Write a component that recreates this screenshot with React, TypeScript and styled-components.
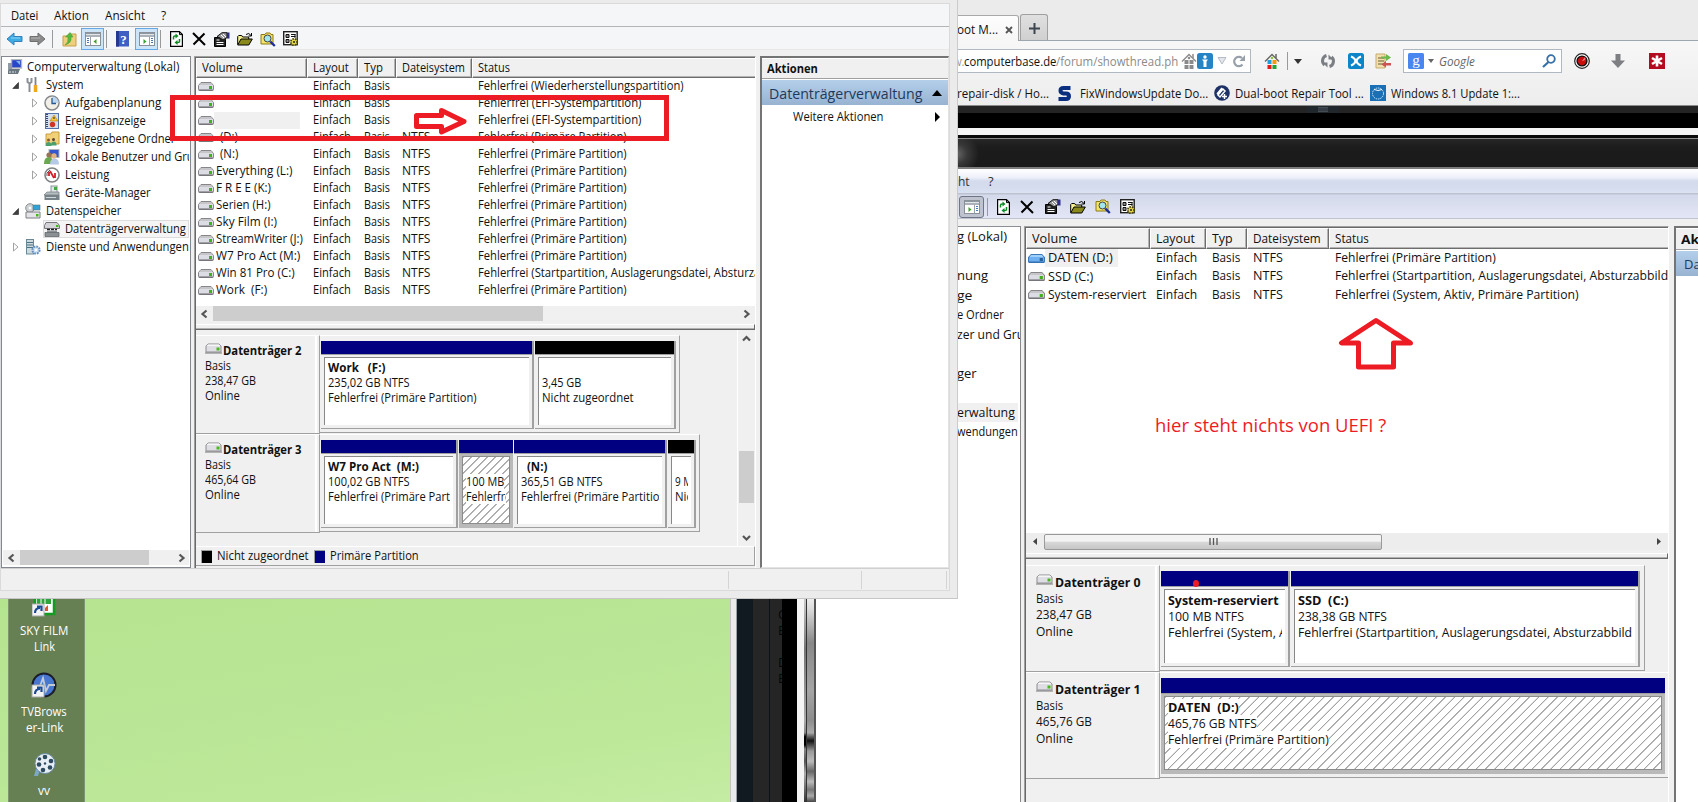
import React, { useLayoutEffect, useRef } from 'react';
import styled, { createGlobalStyle, css } from 'styled-components';

const Global = createGlobalStyle`
  * { box-sizing: border-box; }
  body { margin: 0; overflow: hidden; background: #fff; font-family: 'Open Sans', 'Noto Sans', sans-serif; font-size: 12px; color: #111; }
  svg { display: block; flex: none; }
`;

/* ---------- text fitted to a column width ---------- */
const FitBox = styled.span<{ $w: number; $size: number; $bold?: boolean; $color?: string; $ml?: number; $white?: boolean; $italic?: boolean }>`
  display: block;
  flex: none;
  width: ${p => p.$w}px;
  margin-left: ${p => p.$ml || 0}px;
  font-size: ${p => p.$size}px;
  font-weight: ${p => (p.$bold ? 700 : 400)};
  font-style: ${p => (p.$italic ? 'italic' : 'normal')};
  color: ${p => p.$color || 'inherit'};
  background: ${p => (p.$white ? '#fff' : 'none')};
  white-space: pre;
`;
const FitInner = styled.span`
  display: inline-block;
  transform-origin: 0 50%;
`;
type FitProps = { w: number; size?: number; bold?: boolean; color?: string; ml?: number; white?: boolean; italic?: boolean; children: React.ReactNode };
const Fit = ({ w, size = 12, bold, color, ml, white, italic, children }: FitProps) => {
  const ref = useRef<HTMLSpanElement>(null);
  useLayoutEffect(() => {
    const el = ref.current;
    if (el && el.offsetWidth) el.style.transform = `scaleX(${w / el.offsetWidth})`;
  });
  return (
    <FitBox $w={w} $size={size} $bold={bold} $color={color} $ml={ml} $white={white} $italic={italic}>
      <FitInner ref={ref}>{children}</FitInner>
    </FitBox>
  );
};

const Slot = styled.div<{ $ml?: number; $mt?: number }>`
  flex: none;
  margin-left: ${p => p.$ml || 0}px;
  margin-top: ${p => p.$mt || 0}px;
`;

/* ---------- icons ---------- */
const Drive = ({ blue, w = 16 }: { blue?: boolean; w?: number }) => (
  <svg width={w} height="9" viewBox="0 0 16 9" preserveAspectRatio="none">
    <path d="M3 .5h10l2.500 3v4q0 1-1 1h-13q-1 0-1-1v-4z" fill={blue ? '#6fb0f2' : '#dcdce4'} stroke={blue ? '#3d78b8' : '#85858a'} strokeWidth="1" />
    <path d="M3 1h10l1.500 2h-13z" fill={blue ? '#9fd0fa' : '#c6c6c8'} />
    <path d="M1 8h14" stroke={blue ? '#2f6cad' : '#66666a'} />
    <rect x="11" y="4" width="3" height="3" fill={blue ? '#2c5f94' : '#3fb11c'} />
  </svg>
);
const DiskIcon = () => (
  <svg width="17" height="11" viewBox="0 0 17 11">
    <path d="M3 1h11l2 2v6H1V3z" fill="#dedee4" stroke="#8c8c90" />
    <path d="M3 1.500h11l1.500 1.500h-14z" fill="#f6f6f6" />
    <path d="M0 10h17" stroke="#77777b" />
    <rect x="11.500" y="4.500" width="3" height="3" fill="#4db81e" />
  </svg>
);
const Arrow = ({ gray }: { gray?: boolean }) => (
  <svg width="17" height="14" viewBox="0 0 17 14">
    <path d={gray ? 'M16 7 9 1v3.500H1v5h8V13z' : 'M1 7l7-6v3.500h8v5H8V13z'} fill={gray ? '#8c8c8c' : '#3cace4'} stroke={gray ? '#6f6f6f' : '#3a7fb8'} />
    <path d={gray ? 'M2 6h9' : 'M5 6h9'} stroke={gray ? '#b3b3b3' : '#8fd8f6'} />
  </svg>
);
const FolderUp = () => (
  <svg width="15" height="15" viewBox="0 0 15 15">
    <path d="M1 4h5l1-2h7v12H1z" fill="#efcf7c" stroke="#c79f4a" />
    <path d="M3 13Q7 10 6 5H3.500L8 .5 11 5H9q1 6-6 8z" fill="#56b83c" stroke="#3d9530" strokeWidth=".5" />
  </svg>
);
const Pane = ({ flip }: { flip?: boolean }) => (
  <svg width="16" height="14" viewBox="0 0 16 14">
    <rect x=".5" y=".5" width="15" height="13" fill="#fff" stroke="#8a9097" />
    <path d="M1 1.500h14M1 4h14" stroke="#8e98a3" strokeWidth="1.400" />
    <path d={flip ? 'M10.500 5v8' : 'M5.500 5v8'} stroke="#9aa0a8" />
    {flip ? <path d="M12 6.500h2M12 8.500h2M12 10.500h2" stroke="#4a78b8" /> : <path d="M2 6.500h2M2 8.500h2M2 10.500h2" stroke="#4a78b8" />}
    <path d={flip ? 'M4.500 7v5L7.500 9.500z' : 'M11.500 7v5L8.500 9.500z'} fill="#3da02c" />
  </svg>
);
const HelpBook = () => (
  <svg width="14" height="16" viewBox="0 0 14 16">
    <rect width="13" height="15.500" fill="#3f5fc2" />
    <rect width="3" height="15.500" fill="#26398f" />
    <text x="4.200" y="12.500" fontSize="13" fontWeight="700" fill="#fff" fontFamily="Liberation Serif, serif">?</text>
  </svg>
);
const Refresh = () => (
  <svg width="13" height="16" viewBox="0 0 13 16">
    <path d="M.6.6h8.800l3 3v11.800H.6z" fill="#fff" stroke="#000" strokeWidth="1.200" />
    <path d="M9.500.6v3h3" fill="none" stroke="#000" />
    <path d="M3.500 8.500V6q0-1 1.500-1h1M9.500 8v2.500q0 1-1.500 1H7" fill="none" stroke="#128a28" strokeWidth="1.500" />
    <path d="M5.500 2.500v5L8.500 5zM7.500 9v5l-3-2.500z" fill="#128a28" />
  </svg>
);
const Cross = () => (
  <svg width="14" height="14" viewBox="0 0 14 14">
    <path d="M1 1l12 12M12.500 1.500L1.500 12.500" stroke="#000" strokeWidth="2" />
  </svg>
);
const Props = () => (
  <svg width="16" height="15" viewBox="0 0 16 15">
    <path d="M.5 5.500h9l2 2v7H.5z" fill="#222" stroke="#000" />
    <path d="M2.500 8h3M2.500 10.500h7M2.500 12.500h7" stroke="#fff" />
    <path d="M3 4.500L8 .7h5v5L9 8 6 6z" fill="#999" stroke="#111" />
    <path d="M7 3l3 3M9 2l3 3" stroke="#fff" />
    <rect x="13" y=".500" width="2.500" height="6" fill="#2c2c83" />
  </svg>
);
const OpenFolder = () => (
  <svg width="16" height="14" viewBox="0 0 16 14">
    <path d="M.7 12.500v-8l1-1h3l1 1.500h6v2.500" fill="#f3ee8e" stroke="#000" />
    <path d="M.7 13l3.300-6h11.300l-3.500 6z" fill="#8a8a1c" stroke="#000" />
    <path d="M9 2.500Q12 0 14 3.500M14.500 1v3h-3" fill="none" stroke="#000" />
  </svg>
);
const FindFolder = () => (
  <svg width="16" height="15" viewBox="0 0 16 15">
    <path d="M1 2.500h4L6 1h4l1 1.500h2V12H1z" fill="#f4e469" stroke="#8b7a14" />
    <circle cx="7.500" cy="6.500" r="3.500" fill="#9fe6ef" stroke="#444" />
    <path d="M10.300 9.500l4.500 4.500" stroke="#1b2b9a" strokeWidth="2.400" />
  </svg>
);
const Settings = () => (
  <svg width="16" height="16" viewBox="0 0 16 16">
    <rect x=".7" y=".7" width="13.500" height="13" fill="#fff" stroke="#222" strokeWidth="1.400" />
    <path d="M3 3.500h3v3H3zM3 8.500h3v3H3z" fill="#888" stroke="#111" />
    <path d="M8 3.500h4.500M8 5.500h4.500M12 3v4" stroke="#111" />
    <circle cx="11" cy="11" r="3.200" fill="#e6d84a" stroke="#4c460d" strokeWidth="1.800" strokeDasharray="1.600 1" />
    <circle cx="11" cy="11" r="1" fill="#222" />
  </svg>
);
type TreeIconName = 'computer' | 'tools' | 'clock' | 'event' | 'share' | 'users' | 'perf' | 'device' | 'storage' | 'disk' | 'services';
const TreeIcon = ({ name }: { name: TreeIconName }) => (
  <svg width="16" height="16" viewBox="0 0 16 16">
    {name === 'computer' && <>
      <rect x="4.500" y=".5" width="10" height="8.500" fill="#2846c8" stroke="#b5b9bd" strokeWidth="1.400" />
      <path d="M9 2l4 4V2z" fill="#7fb3f0" /><rect x="1" y="4" width="4" height="8" fill="#8f9aa5" />
      <path d="M1 12l2-2h10l-2 5H1z" fill="#6a7680" /><path d="M2 13h7" stroke="#dfe4e8" strokeDasharray="2 1" />
    </>}
    {name === 'tools' && <>
      <path d="M2.500 1v4l2 1.500V15M6.500 1v4l-2 1.500" fill="none" stroke="#8b9097" strokeWidth="2" />
      <path d="M10.500 0v8" stroke="#7d838a" strokeWidth="1.800" /><path d="M10.500 8v7" stroke="#f0a71c" strokeWidth="3.500" />
    </>}
    {name === 'clock' && <>
      <circle cx="8" cy="8" r="7" fill="#f1efe6" stroke="#87898c" strokeWidth="1.500" />
      <path d="M8 8V1.500A6.500 6.500 0 0 1 14.500 8z" fill="#bcd4ee" /><path d="M8 3v5.500h4" fill="none" stroke="#27588f" strokeWidth="1.300" />
    </>}
    {name === 'event' && <>
      <rect x="1.500" y=".5" width="13" height="15" fill="#d5e0ee" stroke="#5571a5" /><path d="M3 1v14" stroke="#31456e" strokeWidth="2" strokeDasharray="1 1" />
      <path d="M10 2l4 6H6z" fill="#f8c334" stroke="#b07d12" strokeWidth=".6" /><circle cx="8.500" cy="11.500" r="2.700" fill="#d23423" /><path d="M10 4v2" stroke="#222" />
    </>}
    {name === 'share' && <>
      <path d="M2 3h5l1-2h7v12H2z" fill="#f1d078" stroke="#c99d3b" />
      <circle cx="4.500" cy="9" r="1.500" fill="#8a5a3a" /><circle cx="9.500" cy="8.500" r="1.500" fill="#5c4435" />
      <path d="M1.500 15q0-4 3-4t3 4zM7 14.500q0-4 2.800-4t2.800 4z" fill="#49a06e" />
    </>}
    {name === 'users' && <>
      <rect x="5" y=".5" width="10" height="8" fill="#3257cf" stroke="#b0b5ba" />
      <circle cx="5" cy="6" r="2.600" fill="#9b7350" /><circle cx="10" cy="7" r="2.700" fill="#e0b284" />
      <path d="M0 15q0-7 5-7 4 0 4 7z" fill="#6ba84f" /><path d="M6 15.500q0-6 4.500-6t4.500 6z" fill="#b5cae4" />
    </>}
    {name === 'perf' && <>
      <circle cx="8" cy="8" r="7" fill="#fff" stroke="#7f8184" strokeWidth="1.600" />
      <path d="M5 5v4M11 6v5M6 4l4 7" fill="none" stroke="#d3202a" strokeWidth="1.800" /><path d="M3 9V6l3-3" fill="none" stroke="#555" />
    </>}
    {name === 'device' && <>
      <rect x="7" y="1" width="6" height="7" fill="#e2e5e6" stroke="#8d9396" /><rect x="10" y="2" width="3" height="3" fill="#43a83f" />
      <path d="M0 10l3-3h12v3z" fill="#b6bdc2" stroke="#6f787e" strokeWidth=".7" /><rect x=".5" y="10" width="15" height="5" fill="#768188" /><path d="M2 12.500h10" stroke="#cfd5d8" />
    </>}
    {name === 'storage' && <>
      <circle cx="5" cy="5" r="4.300" fill="#cfd2d4" stroke="#8b8f92" /><circle cx="5" cy="5" r="1.300" fill="#fff" />
      <rect x="8" y="2" width="7" height="5" fill="#2ea3da" stroke="#577" strokeWidth=".6" />
      <path d="M1 9h14v6H1z" fill="#e4e4e8" stroke="#7c7c82" /><rect x="11" y="11" width="2.500" height="2.500" fill="#45b51f" />
    </>}
    {name === 'disk' && <>
      <path d="M2 1.500h11l2.500 3v3H.5v-3z" fill="#d3d3d8" stroke="#77777c" /><rect x="12" y="4" width="2.500" height="2" fill="#45b51f" />
      <path d="M3 8.500h10" stroke="#222" strokeWidth="1.500" strokeDasharray="3 1" />
      <rect x="3" y="9.500" width="10" height="2" fill="#8d9296" /><path d="M1 11.500h14v4H1z" fill="#8a9094" stroke="#555b5f" strokeWidth=".7" />
    </>}
    {name === 'services' && <>
      <rect x="1.500" y=".5" width="7" height="14.500" fill="#cdd9e0" stroke="#6d8796" /><path d="M2 3.500h6M2 6h6M2 8.500h6" stroke="#4d7184" />
      <circle cx="11" cy="11" r="3.600" fill="#cfe2f3" stroke="#6691bf" strokeWidth="2" strokeDasharray="1.800 1" /><circle cx="11" cy="11" r="1.200" fill="#fff" />
    </>}
  </svg>
);
const Expander = ({ open }: { open?: boolean }) => (
  <svg width="8" height="10" viewBox="0 0 8 10">
    {open ? <path d="M6.500 2.500v6H.8z" fill="#404040" stroke="#222" strokeWidth=".6" /> : <path d="M1.500 1v8L6 5z" fill="#fff" stroke="#a3a3a3" />}
  </svg>
);
const chevrons = { left: 'M6.500 1.500L2.500 5l4 3.500', right: 'M2.500 1.500l4 3.500-4 3.500', up: 'M1 6.500L4.500 3 8 6.500', down: 'M1 3l3.500 3.500L8 3' };
const Chevron = ({ dir }: { dir: keyof typeof chevrons }) => (
  <svg width="9" height="10" viewBox="0 0 9 10"><path d={chevrons[dir]} fill="none" stroke="#565656" strokeWidth="2.200" /></svg>
);
const Tri = ({ d, w, h, c }: { d: string; w: number; h: number; c: string }) => (
  <svg width={w} height={h} viewBox={`0 0 ${w} ${h}`}><path d={d} fill={c} /></svg>
);
const House = ({ color }: { color?: boolean }) => (
  <svg width="16" height="16" viewBox="0 0 16 16">
    <path d="M1 8.500l7-7 7 7" fill="none" stroke={color ? '#666' : '#8b8b8b'} strokeWidth="1.400" />
    <path d="M12 1v4" stroke={color ? '#666' : '#8b8b8b'} strokeWidth="1.500" />
    <rect x="3.500" y="7" width="4" height="4" fill={color ? '#1ba0e2' : '#8b8b8b'} /><rect x="8.500" y="7" width="4" height="4" fill={color ? '#f59a0c' : '#8b8b8b'} />
    <rect x="3.500" y="12" width="4" height="4" fill={color ? '#e01b1b' : '#8b8b8b'} /><rect x="8.500" y="12" width="4" height="4" fill={color ? '#22a436' : '#8b8b8b'} />
    <circle cx="8" cy="5" r="1.300" fill={color ? '#8cc63f' : '#8b8b8b'} />
  </svg>
);

/* ---------- desktop ---------- */
const Screen = styled.div`
  position: relative;
  width: 1698px;
  height: 802px;
  overflow: hidden;
  background: #fff;
`;
const Wallpaper = styled.div`
  position: absolute;
  left: 0;
  top: 598px;
  width: 816px;
  height: 204px;
  display: flex;
`;
const Green = styled.div`
  width: 730px;
  padding-left: 8px;
  background: linear-gradient(170deg, #b5e48f, #b9e696 45%, #bde899 75%, #c5eca3);
`;
const Dock = styled.div`
  width: 77px;
  height: 204px;
  display: flex;
  flex-direction: column;
  align-items: center;
  padding-right: 5px;
  overflow: hidden;
  background: #667f53;
  border-left: 1px solid #7f9470;
  border-right: 1px solid #7f9470;
  color: #fff;
  line-height: 16px;
`;
const Strip = styled.div<{ $w: number; $bg: string }>`
  flex: none;
  width: ${p => p.$w}px;
  height: 204px;
  background: ${p => p.$bg};
`;
const Letters = styled(Strip)`
  padding: 8px 0 0 8px;
  overflow: hidden;
  font-size: 13px;
  line-height: 16px;
  color: #050505;
`;
const LetterGap = styled.div`height: 16px;`;

/* ---------- shared window parts ---------- */
const AppWindow = styled.div`
  position: absolute;
  left: 0;
  top: 0;
  width: 958px;
  height: 599px;
  padding: 3px 7px 7px 0;
  background: #ebebeb;
  border-right: 1px solid #cbcbcb;
  border-bottom: 1px solid #c6c6c6;
`;
const AppBody = styled.div`
  height: 588px;
  display: flex;
  flex-direction: column;
  background: #f0f0f0;
  border: 1px solid #dadada;
`;
const Bar = styled.div<{ $h: number; $line: string; $bg: string; $pt?: number }>`
  flex: none;
  display: flex;
  align-items: center;
  height: ${p => p.$h}px;
  padding-top: ${p => p.$pt || 0}px;
  background: ${p => p.$bg};
  border-bottom: 1px solid ${p => p.$line};
`;
const Sep = styled.div<{ $ml: number }>`
  width: 1px;
  height: 18px;
  margin-left: ${p => p.$ml}px;
  background: #9a9a9a;
`;
const Toggle = styled.div<{ $ml: number; $old?: boolean }>`
  display: flex;
  align-items: center;
  justify-content: center;
  flex: none;
  width: ${p => (p.$old ? 25 : 23)}px;
  height: 22px;
  margin-left: ${p => p.$ml}px;
  ${p => p.$old
    ? css`border: 1px solid #6e7686; border-radius: 3px; background: #bfc3cf;`
    : css`border: 1px solid #66a7e8; background: #cce4f7;`}
`;
const Panels = styled.div<{ $h: number; $pt: number }>`
  display: flex;
  height: ${p => p.$h}px;
  padding-top: ${p => p.$pt}px;
`;
const TreePanel = styled.div`
  flex: none;
  display: flex;
  flex-direction: column;
  width: 190px;
  height: 512px;
  padding: 1px 1px 2px;
  overflow: hidden;
  background: #fff;
  border: 1px solid #828790;
`;
const TreeList = styled.div`
  flex: 1;
  overflow: hidden;
`;
const TreeRow = styled.div<{ $pad: number }>`
  display: flex;
  align-items: center;
  height: 18px;
  line-height: 18px;
  padding-left: ${p => p.$pad}px;
`;
const TreeItem = styled.div<{ $sel?: boolean; $gap?: number }>`
  flex: 1;
  display: flex;
  align-items: center;
  gap: ${p => p.$gap || 5}px;
  height: 18px;
  padding-left: 1px;
  ${p => p.$sel && css`background: #f5f5f5; box-shadow: inset 0 0 0 1px #dcdcdc;`}
`;
const HScroll = styled.div`
  flex: none;
  display: flex;
  align-items: center;
  height: 15px;
  background: #f0f0f0;
`;
const HThumb = styled.div<{ $ml: number; $w: number }>`
  flex: none;
  width: ${p => p.$w}px;
  height: 15px;
  margin-left: ${p => p.$ml}px;
  background: #cdcdcd;
`;
const Center = styled.div<{ $w: number; $ml: number }>`
  flex: none;
  display: flex;
  flex-direction: column;
  width: ${p => p.$w}px;
  margin-left: ${p => p.$ml}px;
  border-left: 1px solid #a0a0a0;
  border-top: 1px solid #a0a0a0;
  border-right: 1px solid #fff;
  box-shadow: inset 1px 1px 0 #696969;
  padding: 1px 0 0 1px;
  overflow: hidden;
`;
const List = styled.div<{ $h: number }>`
  flex: none;
  height: ${p => p.$h}px;
  background: #fff;
  overflow: hidden;
`;
const Grid = styled.div<{ $cols: string; $h: number; $lh?: number }>`
  display: grid;
  grid-template-columns: ${p => p.$cols};
  height: ${p => p.$h}px;
  line-height: ${p => p.$lh || p.$h - 1}px;
`;
const Head = styled.div`
  overflow: hidden;
  background: #f0f0f0;
  border-top: 1px solid #fff;
  border-left: 1px solid #fff;
  border-right: 1px solid #6d6d6d;
  border-bottom: 1px solid #6d6d6d;
  box-shadow: inset -1px -1px 0 #b4b4b4;
  padding-left: 5px;
  &:last-child { border-right: 0; box-shadow: inset 0 -1px 0 #b4b4b4; }
`;
const Cell = styled.div`
  padding-left: 6px;
  overflow: hidden;
`;
const NameCell = styled.div`
  display: flex;
  align-items: center;
  padding-left: 2px;
  overflow: hidden;
`;
const NameText = styled.div<{ $sel?: number; $h: number; $pad: number }>`
  height: ${p => p.$h}px;
  padding-left: ${p => p.$pad}px;
  ${p => p.$sel && css`width: ${p.$sel}px; background: #f0f0f0;`}
`;
const Splitter = styled.div<{ $h: number }>`
  flex: none;
  height: ${p => p.$h}px;
  background: #f0f0f0;
  border-top: 1px solid #fff;
  border-right: 1px solid #696969;
  border-bottom: 1px solid #696969;
  box-shadow: inset 0 -1px 0 #b0b0b0;
`;
const Disks = styled.div<{ $h: number; $pt: number }>`
  display: flex;
  flex: none;
  height: ${p => p.$h}px;
  padding-top: ${p => p.$pt}px;
  overflow: hidden;
  background: #f0f0f0;
`;
const DiskList = styled.div`flex: 1; min-width: 0;`;
const DiskRow = styled.div<{ $h: number }>`
  display: flex;
  height: ${p => p.$h}px;
`;
const DiskInfo = styled.div<{ $w: number; $lh: number; $pad: number; $pt: number }>`
  flex: none;
  width: ${p => p.$w}px;
  padding: ${p => p.$pt}px 0 0 ${p => p.$pad}px;
  line-height: ${p => p.$lh}px;
  border-top: 1px solid #fff;
  border-bottom: 1px solid #a0a0a0;
  border-right: 1px solid #a0a0a0;
  box-shadow: inset -2px 0 0 #f0f0f0, inset -4px 0 0 #fff;
`;
const DiskTitle = styled.div<{ $lh: number; $gap: number }>`
  display: flex;
  align-items: flex-start;
  gap: ${p => p.$gap}px;
  height: ${p => p.$lh}px;
`;
const DiskTrack = styled.div<{ $w: number; $pt: number }>`
  flex: none;
  display: flex;
  width: ${p => p.$w}px;
  padding: ${p => p.$pt}px 0 3px 1px;
  margin-bottom: 1px;
  border-top: 1px solid #fff;
  border-right: 1px solid #a0a0a0;
  border-bottom: 1px solid #a0a0a0;
`;
const Part = styled.div<{ $w: number; $hatch?: boolean }>`
  flex: none;
  display: flex;
  flex-direction: column;
  width: ${p => p.$w - 1}px;
  margin-right: 1px;
  background: ${p => (p.$hatch ? '#b9b9b9' : '#f0f0f0')};
  border-right: ${p => (p.$hatch ? 0 : 2)}px solid #a0a0a0;
  border-bottom: 1px solid ${p => (p.$hatch ? '#b9b9b9' : '#a0a0a0')};
`;
const PartBar = styled.div<{ $c: string; $h: number }>`
  flex: none;
  height: ${p => p.$h}px;
  background: ${p => p.$c};
  border-bottom: 1px solid #a0a0a0;
`;
const hatch = (step: number) => css`background: repeating-linear-gradient(135deg, #a4a4a4 0 .6px, #fff 1.100px ${step - .4}px, #a4a4a4 ${step}px);`;
const PartBox = styled.div<{ $hatch?: number; $lh: number }>`
  flex: 1;
  margin: 2px 3px 3px 3px;
  padding: 2px 3px 0 3px;
  overflow: hidden;
  line-height: ${p => p.$lh}px;
  background: #fff;
  border-left: 1px solid #888;
  border-top: 1px solid #888;
  ${p => p.$hatch && css`${hatch(p.$hatch)} border: 1px solid #8c8c8c;`}
`;
const Clip = styled.div<{ $lh: number }>`
  height: ${p => p.$lh}px;
  overflow: hidden;
`;
const VScroll = styled.div<{ $h: number }>`
  flex: none;
  display: flex;
  flex-direction: column;
  align-items: center;
  width: 18px;
  height: ${p => p.$h}px;
  margin-top: -5px;
  padding: 4px 1px 3px 0;
  border-left: 1px solid #fff;
`;
const VThumb = styled.div`
  flex: none;
  width: 15px;
  height: 52px;
  margin: 107px 0 30px;
  background: #cdcdcd;
`;
const Legend = styled.div`
  flex: none;
  display: flex;
  align-items: center;
  height: 20px;
  line-height: 18px;
  padding-left: 5px;
  border-top: 1px solid #fff;
  border-right: 1px solid #a0a0a0;
  border-bottom: 1px solid #a0a0a0;
`;
const Swatch = styled.div<{ $c: string; $ml?: number }>`
  width: 11px;
  height: 13px;
  margin: 0 5px 0 ${p => p.$ml || 0}px;
  background: ${p => p.$c};
  border-top: 1px solid #a0a0a0;
  border-left: 1px solid #a0a0a0;
`;
const Side = styled.div<{ $w: number; $ml: number }>`
  flex: none;
  width: ${p => p.$w}px;
  margin-left: ${p => p.$ml}px;
  overflow: hidden;
  background: #fff;
  border-left: 2px solid #747474;
  border-top: 2px solid #747474;
  border-right: 1px solid #e3e3e3;
  border-bottom: 1px solid #e3e3e3;
`;
const SideHead = styled.div<{ $h: number }>`
  height: ${p => p.$h}px;
  padding-left: 5px;
  line-height: ${p => p.$h - 2}px;
  background: #f0f0f0;
  border-top: 1px solid #fff;
  border-bottom: 1px solid #a0a0a0;
`;
const SideGroup = styled.div<{ $pad: number }>`
  display: flex;
  align-items: center;
  height: 25px;
  margin-top: 1px;
  padding-left: ${p => p.$pad}px;
  background: linear-gradient(#b4cfea, #98b3d1);
`;
const SideItem = styled.div`
  display: flex;
  align-items: center;
  height: 23px;
  padding-left: 31px;
`;
const StatusBar = styled.div`
  flex: 1;
  display: flex;
  border-top: 1px solid #d0d0d0;
  padding: 2px 2px 1px 0;
`;
const StatusCell = styled.div<{ $w: number }>`
  width: ${p => p.$w}px;
  border-right: 1px solid #d4d4d4;
`;

/* ---------- data ---------- */
type Node = { pad: number; open?: boolean; leaf?: boolean; icon: TreeIconName; text: string; w: number; sel?: boolean };
const tree: Node[] = [
  { pad: 9, open: true, icon: 'tools', text: 'System', w: 37 },
  { pad: 28, icon: 'clock', text: 'Aufgabenplanung', w: 96 },
  { pad: 28, icon: 'event', text: 'Ereignisanzeige', w: 81 },
  { pad: 28, icon: 'share', text: 'Freigegebene Ordner', w: 110 },
  { pad: 28, icon: 'users', text: 'Lokale Benutzer und Gruppen', w: 155 },
  { pad: 28, icon: 'perf', text: 'Leistung', w: 44 },
  { pad: 40, leaf: true, icon: 'device', text: 'Geräte-Manager', w: 86 },
  { pad: 9, open: true, icon: 'storage', text: 'Datenspeicher', w: 75 },
  { pad: 40, leaf: true, icon: 'disk', text: 'Datenträgerverwaltung', w: 121, sel: true },
  { pad: 9, icon: 'services', text: 'Dienste und Anwendungen', w: 143 },
];
const prim = 'Fehlerfrei (Primäre Partition)';
const efi = 'Fehlerfrei (EFI-Systempartition)';
type Vol = { name: string; w: number; pad?: number; sel?: number; fs?: string; status: string; sw: number; blue?: boolean };
const volumes: Vol[] = [
  { name: '', w: 0, status: 'Fehlerfrei (Wiederherstellungspartition)', sw: 206 },
  { name: '', w: 0, status: efi, sw: 163 },
  { name: '', w: 0, sel: 86, status: efi, sw: 163 },
  { name: '(D:)', w: 18, pad: 6, fs: 'NTFS', status: prim, sw: 149 },
  { name: '(N:)', w: 18, pad: 6, fs: 'NTFS', status: prim, sw: 149 },
  { name: 'Everything (L:)', w: 76, fs: 'NTFS', status: prim, sw: 149 },
  { name: 'F R E E (K:)', w: 55, fs: 'NTFS', status: prim, sw: 149 },
  { name: 'Serien (H:)', w: 55, fs: 'NTFS', status: prim, sw: 149 },
  { name: 'Sky Film (I:)', w: 61, fs: 'NTFS', status: prim, sw: 149 },
  { name: 'StreamWriter (J:)', w: 87, fs: 'NTFS', status: prim, sw: 149 },
  { name: 'W7 Pro Act (M:)', w: 84, fs: 'NTFS', status: prim, sw: 149 },
  { name: 'Win 81 Pro (C:)', w: 79, fs: 'NTFS', status: 'Fehlerfrei (Startpartition, Auslagerungsdatei, Absturzabbild', sw: 309 },
  { name: 'Work  (F:)', w: 51, fs: 'NTFS', status: prim, sw: 149 },
];
const oldVolumes: Vol[] = [
  { name: 'DATEN (D:)', w: 65, sel: 73, fs: 'NTFS', status: prim, sw: 161, blue: true },
  { name: 'SSD (C:)', w: 45, fs: 'NTFS', status: 'Fehlerfrei (Startpartition, Auslagerungsdatei, Absturzabbild', sw: 333 },
  { name: 'System-reserviert', w: 98, fs: 'NTFS', status: 'Fehlerfrei (System, Aktiv, Primäre Partition)', sw: 244 },
];
type Line = [string, number];
type PartData = { w: number; color: string; hatch?: number; title?: Line; ml?: number; size: Line; state: Line };
type Disk = { name: string; size: string; track: number; parts: PartData[] };
const navy = '#000080';
const disks: Disk[] = [
  { name: 'Datenträger 2', size: '238,47 GB', track: 360, parts: [
    { w: 214, color: navy, title: ['Work   (F:)', 57], size: ['235,02 GB NTFS', 82], state: [prim, 149] },
    { w: 142, color: '#000', size: ['3,45 GB', 39], state: ['Nicht zugeordnet', 92] },
  ] },
  { name: 'Datenträger 3', size: '465,64 GB', track: 380, parts: [
    { w: 138, color: navy, title: ['W7 Pro Act  (M:)', 91], size: ['100,02 GB NTFS', 82], state: [prim, 149] },
    { w: 55, color: navy, hatch: 5.66, size: ['100 MB', 38], state: ['Fehlerfrei', 48] },
    { w: 154, color: navy, title: ['(N:)', 20], ml: 6, size: ['365,51 GB NTFS', 82], state: [prim, 149] },
    { w: 29, color: '#000', size: ['9 MB', 24], state: ['Nicht zugeordnet', 92] },
  ] },
];
const oldDisks: Disk[] = [
  { name: 'Datenträger 0', size: '238,47 GB', track: 485, parts: [
    { w: 130, color: navy, title: ['System-reserviert', 111], size: ['100 MB NTFS', 76], state: ['Fehlerfrei (System, Aktiv', 139] },
    { w: 350, color: navy, title: ['SSD  (C:)', 51], size: ['238,38 GB NTFS', 89], state: ['Fehlerfrei (Startpartition, Auslagerungsdatei, Absturzabbild', 334] },
  ] },
  { name: 'Datenträger 1', size: '465,76 GB', track: 509, parts: [
    { w: 505, color: navy, hatch: 6.6, title: ['DATEN  (D:)', 71], size: ['465,76 GB NTFS', 89], state: [prim, 161] },
  ] },
];

const VolumeTable = ({ rows, old }: { rows: Vol[]; old?: boolean }) => {
  const size = old ? 13 : 12;
  const cols = old ? '124px 56px 41px 82px 1fr' : '111px 51px 38px 76px 1fr';
  const heads: Line[] = old
    ? [['Volume', 45], ['Layout', 39], ['Typ', 21], ['Dateisystem', 68], ['Status', 34]]
    : [['Volume', 41], ['Layout', 36], ['Typ', 19], ['Dateisystem', 63], ['Status', 32]];
  return (
    <>
      <Grid $cols={cols} $h={old ? 21 : 20} $lh={18}>
        {heads.map(([t, w]) => <Head key={t}><Fit w={w} size={size}>{t}</Fit></Head>)}
      </Grid>
      {rows.map((v, i) => (
        <Grid key={i} $cols={cols} $h={old ? 18.4 : 17}>
          <NameCell>
            <Drive blue={v.blue} w={old ? 17 : 16} />
            <NameText $sel={v.sel} $h={old ? 18 : 17} $pad={(v.pad || 2) + (old ? 1 : 0)}>{v.name && <Fit w={v.w} size={size}>{v.name}</Fit>}</NameText>
          </NameCell>
          <Cell><Fit w={old ? 41 : 38} size={size}>Einfach</Fit></Cell>
          <Cell><Fit w={old ? 28 : 26} size={size}>Basis</Fit></Cell>
          <Cell>{v.fs && <Fit w={old ? 30 : 28} size={size}>{v.fs}</Fit>}</Cell>
          <Cell><Fit w={v.sw} size={size}>{v.status}</Fit></Cell>
        </Grid>
      ))}
    </>
  );
};

const DiskView = ({ disk, old }: { disk: Disk; old?: boolean }) => {
  const size = old ? 13 : 12;
  const lh = old ? 16.2 : 15;
  return (
    <DiskRow $h={old ? 107 : 99}>
      <DiskInfo $w={old ? 134 : 124} $lh={lh} $pad={old ? 10 : 9} $pt={old ? 8 : 7}>
        <DiskTitle $lh={lh} $gap={old ? 2 : 1}><DiskIcon /><Fit w={old ? 85 : 79} size={size} bold>{disk.name}</Fit></DiskTitle>
        <Fit w={old ? 27 : 26} size={size}>Basis</Fit>
        <Fit w={old ? 56 : 51} size={size}>{disk.size}</Fit>
        <Fit w={old ? 37 : 35} size={size}>Online</Fit>
      </DiskInfo>
      <DiskTrack $w={disk.track} $pt={5}>
        {disk.parts.map((p, i) => (
          <Part key={i} $w={p.w} $hatch={!!p.hatch}>
            <PartBar $c={p.color} $h={old ? 16 : 14} />
            <PartBox $hatch={p.hatch} $lh={lh}>
              <Clip $lh={lh}>{p.title && <Fit w={p.title[1]} size={size} bold ml={p.ml} white>{p.title[0]}</Fit>}</Clip>
              <Clip $lh={lh}><Fit w={p.size[1]} size={size} white>{p.size[0]}</Fit></Clip>
              <Clip $lh={lh}><Fit w={p.state[1]} size={size} white>{p.state[0]}</Fit></Clip>
            </PartBox>
          </Part>
        ))}
      </DiskTrack>
    </DiskRow>
  );
};

const Management = () => (
  <AppWindow>
    <AppBody>
      <Bar $h={23} $line="#b5b5b5" $bg="#f5f6f7">
        <Fit ml={10} w={27}>Datei</Fit><Fit ml={16} w={35}>Aktion</Fit><Fit ml={16} w={40}>Ansicht</Fit><Fit ml={16} w={5}>?</Fit>
      </Bar>
      <Bar $h={23} $line="#e8e8e8" $bg="#f5f6f7" $pt={2}>
        <Slot $ml={5}><Arrow /></Slot><Slot $ml={6}><Arrow gray /></Slot>
        <Sep $ml={6} /><Slot $ml={9}><FolderUp /></Slot>
        <Toggle $ml={4}><Pane /></Toggle><Sep $ml={2} />
        <Slot $ml={9}><HelpBook /></Slot><Toggle $ml={5}><Pane flip /></Toggle><Sep $ml={2} />
        <Slot $ml={9}><Refresh /></Slot><Slot $ml={9}><Cross /></Slot><Slot $ml={8}><Props /></Slot>
        <Slot $ml={7}><OpenFolder /></Slot><Slot $ml={7}><FindFolder /></Slot><Slot $ml={7}><Settings /></Slot>
      </Bar>
      <Panels $h={518} $pt={6}>
        <TreePanel>
          <TreeList>
            <TreeRow $pad={3}><TreeItem $gap={4}><TreeIcon name="computer" /><Fit w={152}>Computerverwaltung (Lokal)</Fit></TreeItem></TreeRow>
            {tree.map(n => (
              <TreeRow key={n.text} $pad={n.pad}>
                {!n.leaf && <><Expander open={n.open} /><Slot $ml={4} /></>}
                <TreeItem $sel={n.sel}><TreeIcon name={n.icon} /><Fit w={n.w}>{n.text}</Fit></TreeItem>
              </TreeRow>
            ))}
          </TreeList>
          <HScroll><Slot $ml={4}><Chevron dir="left" /></Slot><HThumb $ml={4} $w={129} /><Slot $ml={28}><Chevron dir="right" /></Slot></HScroll>
        </TreePanel>
        <Center $w={562} $ml={3}>
          <List $h={248}><VolumeTable rows={volumes} /></List>
          <HScroll><Slot $ml={4}><Chevron dir="left" /></Slot><HThumb $ml={4} $w={330} /><Slot $ml={199}><Chevron dir="right" /></Slot></HScroll>
          <Slot $mt={3} />
          <Splitter $h={6} />
          <Disks $h={216} $pt={5}>
            <DiskList>{disks.map(d => <DiskView key={d.name} disk={d} />)}</DiskList>
            <VScroll $h={216}><Chevron dir="up" /><VThumb /><Chevron dir="down" /></VScroll>
          </Disks>
          <Legend>
            <Swatch $c="#000" /><Fit w={92}>Nicht zugeordnet</Fit>
            <Swatch $c={navy} $ml={5} /><Fit w={89}>Primäre Partition</Fit>
          </Legend>
        </Center>
        <Side $w={189} $ml={4}>
          <SideHead $h={21}><Fit w={51} bold>Aktionen</Fit></SideHead>
          <SideGroup $pad={7}><Fit w={153} size={15} color="#1e395b">Datenträgerverwaltung</Fit><Slot $ml={10}><Tri w={10} h={6} c="#000" d="M0 6L5 0l5 6z" /></Slot></SideGroup>
          <SideItem><Fit w={91}>Weitere Aktionen</Fit><Slot $ml={51}><Tri w={5} h={10} c="#000" d="M0 0l5 5-5 5z" /></Slot></SideItem>
        </Side>
      </Panels>
      <StatusBar><StatusCell $w={729} /><StatusCell $w={133} /><StatusCell $w={85} /></StatusBar>
    </AppBody>
  </AppWindow>
);

/* ---------- browser and the picture shown in it ---------- */
const Browser = styled.div`
  position: absolute;
  left: 957px;
  top: 0;
  width: 741px;
  height: 802px;
  display: flex;
  flex-direction: column;
  overflow: hidden;
`;
const Tabs = styled.div`
  flex: none;
  display: flex;
  align-items: flex-end;
  gap: 1px;
  height: 41px;
  background: #ebebeb;
  border-bottom: 1px solid #9ca6b0;
`;
const Tab = styled.div`
  display: flex;
  align-items: center;
  width: 62px;
  height: 26px;
  margin-bottom: -1px;
  padding-top: 2px;
  background: linear-gradient(#fdfdfd, #f6f6f6);
  border-top: 1px solid #a8a8a8;
  border-right: 1px solid #a0a0a0;
  border-radius: 0 3px 0 0;
`;
const NewTab = styled.div`
  display: flex;
  align-items: center;
  justify-content: center;
  width: 28px;
  height: 26px;
  padding-top: 2px;
  background: linear-gradient(#e0e0e0, #d0d0d0);
  border: 1px solid #a0a0a0;
  border-bottom: 0;
  border-radius: 3px 3px 0 0;
`;
const Chrome = styled.div`
  flex: none;
  height: 65px;
  background: linear-gradient(#f7f7f7, #ededed);
  border-bottom: 1px solid #8a8a8a;
`;
const NavRow = styled.div`
  display: flex;
  align-items: center;
  height: 40px;
`;
const UrlBox = styled.div`
  display: flex;
  align-items: center;
  width: 294px;
  height: 24px;
  background: #fff;
  border: 1px solid #b0b8c2;
  border-left: 0;
`;
const SearchBox = styled.div`
  display: flex;
  align-items: center;
  width: 159px;
  height: 24px;
  margin-left: 11px;
  padding-left: 4px;
  background: #fff;
  border: 1px solid #b0b8c2;
`;
const BookRow = styled.div`
  display: flex;
  align-items: center;
  height: 24px;
`;
const Band = styled.div<{ $h: number; $bg: string }>`
  flex: none;
  display: flex;
  align-items: center;
  height: ${p => p.$h}px;
  background: ${p => p.$bg};
`;
const Grip = styled.div`
  width: 32px;
  height: 7px;
  margin-left: 350px;
  padding: 1px 11px;
  background: #20272d;
`;
const GripLines = styled.div`
  height: 5px;
  border-top: 1px solid #444c54;
  border-bottom: 1px solid #444c54;
  background: #343b42;
`;
const OldTree = styled.div`
  flex: none;
  width: 64px;
  height: 583px;
  overflow: hidden;
  background: #fff;
  border-top: 1px solid #8c9096;
  border-right: 1px solid #888;
`;
const OldTreeRow = styled.div<{ $sel?: boolean }>`
  display: flex;
  height: 19.5px;
  width: 61px;
  line-height: 19px;
  ${p => p.$sel && css`background: #f0f0f0;`}
`;
const OldScroll = styled.div`
  flex: none;
  display: flex;
  align-items: center;
  height: 17px;
  background: #ededed;
`;
const OldThumb = styled.div`
  display: flex;
  align-items: center;
  justify-content: center;
  width: 338px;
  height: 16px;
  margin-left: 7px;
  background: linear-gradient(#f3f3f3 0 45%, #d8d8d8 50%, #c6c6c6);
  border: 1px solid #999;
  border-radius: 2px;
`;
const OldFrame = styled.div`
  flex: 1;
  display: flex;
  padding-top: 7px;
  background: #f0f0f0;
`;

const oldTree: [string, number, boolean?][] = [
  ['g (Lokal)', 50], ['', 0], ['nung', 31], ['ge', 15], ['e Ordner', 47], ['zer und Gru', 67], ['', 0], ['ger', 20], ['', 0], ['erwaltung', 58, true], ['wendungen', 61],
];

const BrowserView = () => (
  <Browser>
    <Tabs>
      <Tab>
        <Fit w={41}>oot M...</Fit>
        <Slot $ml={7}><svg width="8" height="8" viewBox="0 0 8 8"><path d="M1 1l6 6M7 1L1 7" stroke="#555" strokeWidth="1.800" /></svg></Slot>
      </Tab>
      <NewTab><svg width="11" height="11" viewBox="0 0 11 11"><path d="M5.500 0v11M0 5.500h11" stroke="#3c4650" strokeWidth="2" /></svg></NewTab>
    </Tabs>
    <Chrome>
      <NavRow>
        <UrlBox>
          <Fit w={7} color="#8a8a8a">v.</Fit><Fit w={92}>computerbase.de</Fit><Fit w={122} color="#8a8a8a">/forum/showthread.ph</Fit>
          <Slot $ml={3}><House /></Slot>
          <svg width="16" height="16" viewBox="0 0 16 16"><rect width="16" height="16" rx="2.500" fill="#2484c6" /><circle cx="8" cy="4" r="1.700" fill="#fff" /><path d="M5 6.500h6l-1.500 2V14h-3V8.500z" fill="#fff" /></svg>
          <Slot $ml={4}><svg width="10" height="8" viewBox="0 0 10 8"><path d="M1 .5h8L5 7z" fill="#e3e6ea" stroke="#b6bcc6" /></svg></Slot>
          <Slot $ml={6}><svg width="13" height="13" viewBox="0 0 13 13"><path d="M9.500 9.500A4.700 4.700 0 1 1 9 3" fill="none" stroke="#98a0aa" strokeWidth="2.200" /><path d="M12 0v6H6.500z" fill="#98a0aa" /></svg></Slot>
        </UrlBox>
        <Slot $ml={13}><House color /></Slot>
        <Sep $ml={7} />
        <Slot $ml={6}><Tri w={8} h={5} c="#333" d="M0 0h8L4 5z" /></Slot>
        <Slot $ml={18}><svg width="16" height="16" viewBox="0 0 16 16"><path d="M6.500 2.500A5.500 5.500 0 0 0 4.500 12M9.500 13.500A5.500 5.500 0 0 0 11.500 4" fill="none" stroke="#7b7e82" strokeWidth="3" /><path d="M2.500 9.500h5v5zM13.500 6.500h-5v-5z" fill="#7b7e82" /></svg></Slot>
        <Slot $ml={12}><svg width="16" height="16" viewBox="0 0 16 16"><rect width="16" height="16" rx="2.500" fill="#0d86c9" /><path d="M3 3.500Q7 5 7.500 8 7 11 3 12.500M13 3.500Q9 5 8.500 8 9 11 13 12.500" fill="none" stroke="#fff" strokeWidth="2" /></svg></Slot>
        <Slot $ml={11}><svg width="17" height="16" viewBox="0 0 17 16"><path d="M1 1h9v14H1z" fill="#f1dfae" stroke="#c7ab70" /><path d="M3 5h6M3 8h6M3 11h6" stroke="#6f5d36" /><path d="M6 3.500h5V1l5 3.500L11 8V5.500H6z" fill="#6cb84a" /><path d="M16 10h-5V8l-4.500 3.500 4.500 3v-2h5z" fill="#cf5252" /></svg></Slot>
        <SearchBox>
          <svg width="16" height="16" viewBox="0 0 16 16"><rect width="16" height="16" rx="1.500" fill="#4a86f0" /><text x="4.200" y="11.500" fontSize="15" fill="#fff" fontFamily="Liberation Serif, serif">g</text></svg>
          <Slot $ml={4}><Tri w={6} h={4} c="#666" d="M0 0h6L3 4z" /></Slot>
          <Fit ml={5} w={36} italic color="#666">Google</Fit>
          <Slot $ml={67}><svg width="15" height="14" viewBox="0 0 15 14"><circle cx="9" cy="5" r="3.800" fill="none" stroke="#3570a8" strokeWidth="1.800" /><path d="M6.500 8L1 13" stroke="#3570a8" strokeWidth="2.200" /></svg></Slot>
        </SearchBox>
        <Slot $ml={12}><svg width="16" height="16" viewBox="0 0 16 16"><circle cx="8" cy="8" r="7.300" fill="#fff" stroke="#222" strokeWidth="1.200" /><circle cx="8" cy="8" r="4.900" fill="#c80d0d" stroke="#111" strokeWidth="1.400" /><path d="M8 8l3-4q2 3-3 4z" fill="#f77" /></svg></Slot>
        <Slot $ml={21}><svg width="14" height="14" viewBox="0 0 14 14"><path d="M4.500 0h5v6.500H14L7 14 0 6.500h4.500z" fill="#7d7f83" /></svg></Slot>
        <Slot $ml={24}><svg width="16" height="16" viewBox="0 0 16 16"><rect width="16" height="16" fill="#b50b20" /><path d="M8 2.500v11M3 5l10 6M13 5L3 11" stroke="#fff" strokeWidth="2.600" /></svg></Slot>
      </NavRow>
      <BookRow>
        <Fit w={92}>repair-disk / Ho...</Fit>
        <Slot $ml={8}><svg width="16" height="17" viewBox="0 0 16 17"><path d="M13.500 3H6.500Q3.500 3 3.500 5.500T6.500 8.500h2.500q3 0 3 2.700T9 14H1.500" fill="none" stroke="#0a2f80" strokeWidth="4" /></svg></Slot>
        <Fit ml={7} w={128}>FixWindowsUpdate Do...</Fit>
        <Slot $ml={6}><svg width="16" height="16" viewBox="0 0 16 16"><circle cx="8" cy="8" r="7.800" fill="#1d3166" /><path d="M4 10l5-6 2 2-5 6zM3 9L8 3M10.500 9v5M8 11.500h5" fill="none" stroke="#fff" strokeWidth="1.500" /></svg></Slot>
        <Fit ml={5} w={129}>Dual-boot Repair Tool ...</Fit>
        <Slot $ml={6}><svg width="16" height="16" viewBox="0 0 16 16"><rect width="16" height="16" fill="#1a6fb5" /><circle cx="8" cy="8.500" r="5.500" fill="none" stroke="#d6ecfb" strokeDasharray="1.500 .8" /><path d="M4 4.500q4 2 8 0" fill="none" stroke="#fff" /></svg></Slot>
        <Fit ml={5} w={129}>Windows 8.1 Update 1:...</Fit>
      </BookRow>
    </Chrome>
    <Band $h={7} $bg="#242424"><Grip><GripLines /></Grip></Band>
    <Band $h={15} $bg="#000" />
    <Band $h={7} $bg="#f5f5f5" />
    <Band $h={3} $bg="#0a0a0a" />
    <Band $h={1} $bg="#8a8a8a" />
    <Band $h={28} $bg="radial-gradient(circle at 0 15px, #666 0, #383838 10px, transparent 22px), linear-gradient(#262626, #1c1c1c 30%, #1a1a1a)" />
    <Band $h={2} $bg="#7d7d7d" />
    <Band $h={24} $bg="linear-gradient(#fff 0, #eef1fa 35%, #d3dbed 50%, #d5dced 80%, #dbe2f2 100%)"><Fit ml={1} w={12} size={13} color="#333">ht</Fit><Fit ml={18} w={6} size={13} color="#333">?</Fit></Band>
    <Bar $h={26} $line="#bfc3cf" $bg="linear-gradient(#bcc2cf 0 1px, #d4daeb 2px, #e2e5f5)" $pt={2}>
      <Toggle $ml={2} $old><Pane flip /></Toggle><Sep $ml={3} />
      <Slot $ml={9}><Refresh /></Slot><Slot $ml={10}><Cross /></Slot><Slot $ml={11}><Props /></Slot>
      <Slot $ml={9}><OpenFolder /></Slot><Slot $ml={9}><FindFolder /></Slot><Slot $ml={9}><Settings /></Slot>
    </Bar>
    <OldFrame>
      <OldTree>
        {oldTree.map(([t, w, sel], i) => <OldTreeRow key={i} $sel={sel}>{t && <Fit w={w} size={13}>{t}</Fit>}</OldTreeRow>)}
      </OldTree>
      <Center $w={645} $ml={3}>
        <List $h={305}><VolumeTable rows={oldVolumes} old /></List>
        <OldScroll>
          <Slot $ml={7}><Tri w={4} h={7} c="#444" d="M4 0v7L0 3.500z" /></Slot>
          <OldThumb><svg width="9" height="7" viewBox="0 0 9 7"><path d="M1 0v7M4.500 0v7M8 0v7" stroke="#555" strokeWidth="1.300" /></svg></OldThumb>
          <Slot $ml={275}><Tri w={4} h={7} c="#444" d="M0 0v7l4-3.500z" /></Slot>
        </OldScroll>
        <Slot $mt={3} />
        <Splitter $h={6} />
        <Disks $h={243} $pt={6}>
          <DiskList>{oldDisks.map(d => <DiskView key={d.name} disk={d} old />)}</DiskList>
        </Disks>
      </Center>
      <Side $w={60} $ml={5}>
        <SideHead $h={22}><Fit w={18} size={13} bold>Ak</Fit></SideHead>
        <SideGroup $pad={8}><Fit w={17} size={13} color="#1e395b">Da</Fit></SideGroup>
      </Side>
    </OldFrame>
  </Browser>
);

/* ---------- hand-drawn marks ---------- */
const Marks = styled.svg`
  position: absolute;
  left: 0;
  top: 0;
`;
const Remark = styled.div`
  position: absolute;
  left: 1155px;
  top: 413px;
  line-height: 24px;
`;

export default function App() {
  return (
    <Screen>
      <Global />
      <BrowserView />
      <Wallpaper>
        <Green>
          <Dock>
            <svg width="24" height="19" viewBox="0 0 24 19"><path d="M3-2h19v18H3z" fill="#fff" stroke="#159a24" strokeWidth="2.500" /><path d="M5 1h14v5H5z" fill="#2fa43a" /><path d="M9 0v6M13 0v6" stroke="#fff" /><path d="M13 13v-3l3-3v6z" fill="#e0552b" /><rect y="6" width="12" height="12" fill="#f4f4f4" stroke="#aaa" /><path d="M3 15q0-5 5-5M5 8.500h4.500V13" fill="none" stroke="#1c4a94" strokeWidth="2.200" /></svg>
            <Slot $mt={6} /><Fit w={48}>SKY FILM</Fit><Fit w={21}>Link</Fit>
            <Slot $mt={17} />
            <svg width="26" height="26" viewBox="0 0 26 26"><circle cx="13" cy="13" r="11.500" fill="#4777cf" stroke="#1b1e28" strokeWidth="2" /><path d="M3 14h6l3-8 3 13 3-6h6" fill="none" stroke="#c3cbd5" strokeWidth="1.800" /><rect x="1" y="13" width="12" height="12" fill="#f4f4f4" stroke="#aaa" /><path d="M4 22q0-5 5-5M6 15.500h4.500V20" fill="none" stroke="#1c4a94" strokeWidth="2.200" /></svg>
            <Slot $mt={6} /><Fit w={46}>TVBrows</Fit><Fit w={37}>er-Link</Fit>
            <Slot $mt={16} />
            <svg width="24" height="25" viewBox="0 0 24 25"><path d="M5 13l-3 11h4l2-6" fill="#7da7c9" /><circle cx="13" cy="11.500" r="10" fill="#e8eff4" stroke="#6c8ca3" /><g fill="#2e4c60"><circle cx="13" cy="5" r="2.300" /><circle cx="19" cy="9" r="2.300" /><circle cx="18" cy="15.500" r="2.300" /><circle cx="11" cy="18" r="2.300" /><circle cx="7" cy="12.500" r="2.300" /><circle cx="7.500" cy="7" r="1.800" /><circle cx="13" cy="11.500" r="1.200" /></g></svg>
            <Slot $mt={6} /><Fit w={12}>vv</Fit>
          </Dock>
        </Green>
        <Strip $w={1} $bg="#c4c4c4" />
        <Strip $w={5} $bg="#ebebeb" />
        <Strip $w={1} $bg="#9aa1a8" />
        <Strip $w={16} $bg="#121a21" />
        <Strip $w={16} $bg="#262626" />
        <Strip $w={1} $bg="#0c1319" />
        <Letters $w={12} $bg="#252525">C<br />E<LetterGap />D<br />E</Letters>
        <Strip $w={15} $bg="#000" />
        <Strip $w={7} $bg="#f5f5f5" />
        <Strip $w={2} $bg="linear-gradient(#ccc, #777 25%, #aaa 60%, #888 66%, #000 68% 72%, #888 74%, #555 80%, #aaa 86%, #333)" />
        <Strip $w={1} $bg="#333" />
        <Strip $w={7} $bg="linear-gradient(#eee, #ddd 5%, #888 22%, #a5a5a5 45%, #8d8d8d 60%, #aaa 66%, #111 70%, #999 75%, #bbb 80%, #666 85%, #bbb 90%, #777 94%, #aaa 97%, #444)" />
        <Strip $w={2} $bg="#555" />
      </Wallpaper>
      <Management />
      <Marks width="1698" height="802" viewBox="0 0 1698 802">
        <g fill="none" stroke="#ed1c24">
          <rect x="172.500" y="97.500" width="494" height="41" strokeWidth="5" />
          <path d="M416.500 115.500h25v-5l22.500 11-22.500 10.500v-5.500h-25z" strokeWidth="5" strokeLinejoin="round" />
          <path d="M1376 320.500l-34.500 22.500h17v24h35V343h17z" strokeWidth="5" strokeLinejoin="round" />
        </g>
        <ellipse cx="1196" cy="583.500" rx="3" ry="3.500" fill="#ed1c24" />
      </Marks>
      <Remark><Fit w={231} size={18} color="#ed1c24">hier steht nichts von UEFI ?</Fit></Remark>
    </Screen>
  );
}
